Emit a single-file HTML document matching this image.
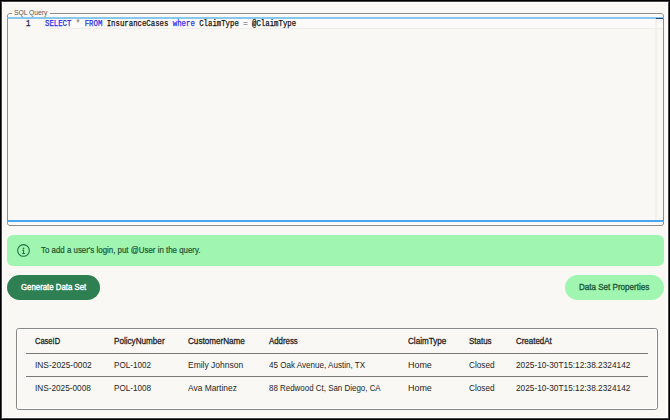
<!DOCTYPE html>
<html><head><meta charset="utf-8">
<style>
html,body{margin:0;padding:0;}
body{width:670px;height:420px;position:relative;overflow:hidden;background:#f9f8f4;font-family:"Liberation Sans",sans-serif;}
.box,.t{position:absolute;box-sizing:border-box;}
.t{white-space:pre;transform-origin:0 0;}
.kw{color:#2a2af0;}
.op{color:#888;}
</style></head>
<body>
<div class="box" style="left:0;top:0;width:670px;height:420px;border:1px solid #000;"></div>
<div class="box" style="left:1px;top:1px;width:668px;height:418px;border:1px solid #444;"></div>
<div class="box" style="left:2px;top:2px;width:666px;height:416px;border:1px solid #fff;"></div>
<div class="box" style="left:7px;top:13px;width:657px;height:213px;border:1px solid #8a8d88;border-radius:3px;"></div>
<div class="box" style="left:8px;top:14px;width:655px;height:211px;border:1px solid #fff;border-radius:2px;"></div>
<div class="box" style="left:7px;top:17px;width:657px;height:205px;border:1px solid #40a2f2;border-bottom:2px solid #4aa6f0;border-top:2px solid #86c8f2;background:#f9f8f4;"></div>
<div class="box" style="left:12px;top:12px;width:38px;height:3px;background:#f9f8f4;"></div>
<div class="box" style="left:44px;top:19px;width:619px;height:10px;background:#fbfaf8;border-left:1px solid #f2f1ed;border-bottom:1px solid #efeeea;"></div>
<div class="box" style="left:654.6px;top:19px;width:2.2px;height:201px;background:#f1f0ec;"></div>
<div class="box" style="left:656px;top:18px;width:7px;height:1px;background:#2f4470;"></div>
<div class="box" style="left:7px;top:235px;width:657px;height:30.8px;border-radius:6px;background:#a0f5b0;"></div>
<svg style="position:absolute;left:16px;top:243px" width="15" height="15" viewBox="0 0 15 15">
<circle cx="7.5" cy="7.45" r="5.85" fill="none" stroke="#236f48" stroke-width="1.1"/>
<circle cx="7.5" cy="5.3" r="0.85" fill="#226f47"/>
<path d="M6.2 6.8 H8.05 V10.05 H9 V10.95 H6.2 V10.05 H7.05 V7.7 H6.2 Z" fill="#226f47"/>
</svg>
<div class="box" style="left:7px;top:275px;width:93.4px;height:25.4px;border-radius:13px;background:#2e8052;"></div>
<div class="box" style="left:564.7px;top:275px;width:99.2px;height:25.4px;border-radius:13px;background:#a0f5b0;"></div>
<div class="box" style="left:16px;top:328px;width:642px;height:82px;border:1px solid #858884;border-radius:3px;"></div>
<div class="box" style="left:17px;top:329px;width:640px;height:80px;border:1px solid #fff;border-radius:2px;"></div>
<div class="box" style="left:26px;top:353px;width:622px;height:1px;background:#777a76;"></div>
<div class="box" style="left:26px;top:376px;width:622px;height:1px;background:#777a76;"></div>
<div class="t" id="legend" style="left:14px;top:8px;font-size:7.6px;font-weight:normal;color:#555;line-height:9.12px;transform:scaleX(0.8870);font-family:'Liberation Sans',sans-serif;">SQL Query</div>
<div class="t" id="ln" style="left:25.5px;top:19px;font-size:8.6px;font-weight:normal;color:#1a2550;line-height:10.32px;transform:scaleX(0.8530);font-family:'Liberation Mono',monospace;-webkit-text-stroke:0.3px currentColor;">1</div>
<div class="t" id="code" style="left:45px;top:19px;font-size:8.6px;font-weight:normal;color:#111;line-height:10.32px;transform:scaleX(0.8539);font-family:'Liberation Mono',monospace;-webkit-text-stroke:0.25px currentColor;"><span class="kw">SELECT</span> <span class="op">*</span> <span class="kw">FROM</span> InsuranceCases <span class="kw">where</span> ClaimType <span class="op">=</span> @ClaimType</div>
<div class="t" id="info" style="left:41px;top:244px;font-size:9.4px;font-weight:normal;color:#1a5232;line-height:11.28px;transform:scaleX(0.8424);font-family:'Liberation Sans',sans-serif;-webkit-text-stroke:0.2px currentColor;">To add a user's login, put @User in the query.</div>
<div class="t" id="gen" style="left:21px;top:281.4px;font-size:9.6px;font-weight:normal;color:#fff;line-height:11.52px;transform:scaleX(0.8156);font-family:'Liberation Sans',sans-serif;-webkit-text-stroke:0.4px currentColor;">Generate Data Set</div>
<div class="t" id="props" style="left:579px;top:281.4px;font-size:9.6px;font-weight:normal;color:#1f5e3a;line-height:11.52px;transform:scaleX(0.8389);font-family:'Liberation Sans',sans-serif;-webkit-text-stroke:0.4px currentColor;">Data Set Properties</div>
<div class="t" id="h0" style="left:35px;top:335px;font-size:9.6px;font-weight:normal;color:#222;line-height:11.52px;transform:scaleX(0.7831);font-family:'Liberation Sans',sans-serif;-webkit-text-stroke:0.3px currentColor;">CaseID</div>
<div class="t" id="a0" style="left:35px;top:359px;font-size:9.5px;font-weight:normal;color:#252525;line-height:11.4px;transform:scaleX(0.8810);font-family:'Liberation Sans',sans-serif;">INS-2025-0002</div>
<div class="t" id="b0" style="left:35px;top:382px;font-size:9.5px;font-weight:normal;color:#252525;line-height:11.4px;transform:scaleX(0.8666);font-family:'Liberation Sans',sans-serif;">INS-2025-0008</div>
<div class="t" id="h1" style="left:114px;top:335px;font-size:9.6px;font-weight:normal;color:#222;line-height:11.52px;transform:scaleX(0.8472);font-family:'Liberation Sans',sans-serif;-webkit-text-stroke:0.3px currentColor;">PolicyNumber</div>
<div class="t" id="a1" style="left:114px;top:359px;font-size:9.5px;font-weight:normal;color:#252525;line-height:11.4px;transform:scaleX(0.8527);font-family:'Liberation Sans',sans-serif;">POL-1002</div>
<div class="t" id="b1" style="left:114px;top:382px;font-size:9.5px;font-weight:normal;color:#252525;line-height:11.4px;transform:scaleX(0.8527);font-family:'Liberation Sans',sans-serif;">POL-1008</div>
<div class="t" id="h2" style="left:188px;top:335px;font-size:9.6px;font-weight:normal;color:#222;line-height:11.52px;transform:scaleX(0.8468);font-family:'Liberation Sans',sans-serif;-webkit-text-stroke:0.3px currentColor;">CustomerName</div>
<div class="t" id="a2" style="left:188px;top:359px;font-size:9.5px;font-weight:normal;color:#252525;line-height:11.4px;transform:scaleX(0.8932);font-family:'Liberation Sans',sans-serif;">Emily Johnson</div>
<div class="t" id="b2" style="left:188px;top:382px;font-size:9.5px;font-weight:normal;color:#252525;line-height:11.4px;transform:scaleX(0.8837);font-family:'Liberation Sans',sans-serif;">Ava Martinez</div>
<div class="t" id="h3" style="left:269px;top:335px;font-size:9.6px;font-weight:normal;color:#222;line-height:11.52px;transform:scaleX(0.8155);font-family:'Liberation Sans',sans-serif;-webkit-text-stroke:0.3px currentColor;">Address</div>
<div class="t" id="a3" style="left:269px;top:359px;font-size:9.5px;font-weight:normal;color:#252525;line-height:11.4px;transform:scaleX(0.8496);font-family:'Liberation Sans',sans-serif;">45 Oak Avenue, Austin, TX</div>
<div class="t" id="b3" style="left:269px;top:382px;font-size:9.5px;font-weight:normal;color:#252525;line-height:11.4px;transform:scaleX(0.8358);font-family:'Liberation Sans',sans-serif;">88 Redwood Ct, San Diego, CA</div>
<div class="t" id="h4" style="left:408px;top:335px;font-size:9.6px;font-weight:normal;color:#222;line-height:11.52px;transform:scaleX(0.8437);font-family:'Liberation Sans',sans-serif;-webkit-text-stroke:0.3px currentColor;">ClaimType</div>
<div class="t" id="a4" style="left:408px;top:359px;font-size:9.5px;font-weight:normal;color:#252525;line-height:11.4px;transform:scaleX(0.9388);font-family:'Liberation Sans',sans-serif;">Home</div>
<div class="t" id="b4" style="left:408px;top:382px;font-size:9.5px;font-weight:normal;color:#252525;line-height:11.4px;transform:scaleX(0.9388);font-family:'Liberation Sans',sans-serif;">Home</div>
<div class="t" id="h5" style="left:469px;top:335px;font-size:9.6px;font-weight:normal;color:#222;line-height:11.52px;transform:scaleX(0.8284);font-family:'Liberation Sans',sans-serif;-webkit-text-stroke:0.3px currentColor;">Status</div>
<div class="t" id="a5" style="left:469px;top:359px;font-size:9.5px;font-weight:normal;color:#252525;line-height:11.4px;transform:scaleX(0.8627);font-family:'Liberation Sans',sans-serif;">Closed</div>
<div class="t" id="b5" style="left:469px;top:382px;font-size:9.5px;font-weight:normal;color:#252525;line-height:11.4px;transform:scaleX(0.8627);font-family:'Liberation Sans',sans-serif;">Closed</div>
<div class="t" id="h6" style="left:516px;top:335px;font-size:9.6px;font-weight:normal;color:#222;line-height:11.52px;transform:scaleX(0.8267);font-family:'Liberation Sans',sans-serif;-webkit-text-stroke:0.3px currentColor;">CreatedAt</div>
<div class="t" id="a6" style="left:516px;top:359px;font-size:9.5px;font-weight:normal;color:#252525;line-height:11.4px;transform:scaleX(0.8734);font-family:'Liberation Sans',sans-serif;">2025-10-30T15:12:38.2324142</div>
<div class="t" id="b6" style="left:516px;top:382px;font-size:9.5px;font-weight:normal;color:#252525;line-height:11.4px;transform:scaleX(0.8734);font-family:'Liberation Sans',sans-serif;">2025-10-30T15:12:38.2324142</div>
</body></html>
